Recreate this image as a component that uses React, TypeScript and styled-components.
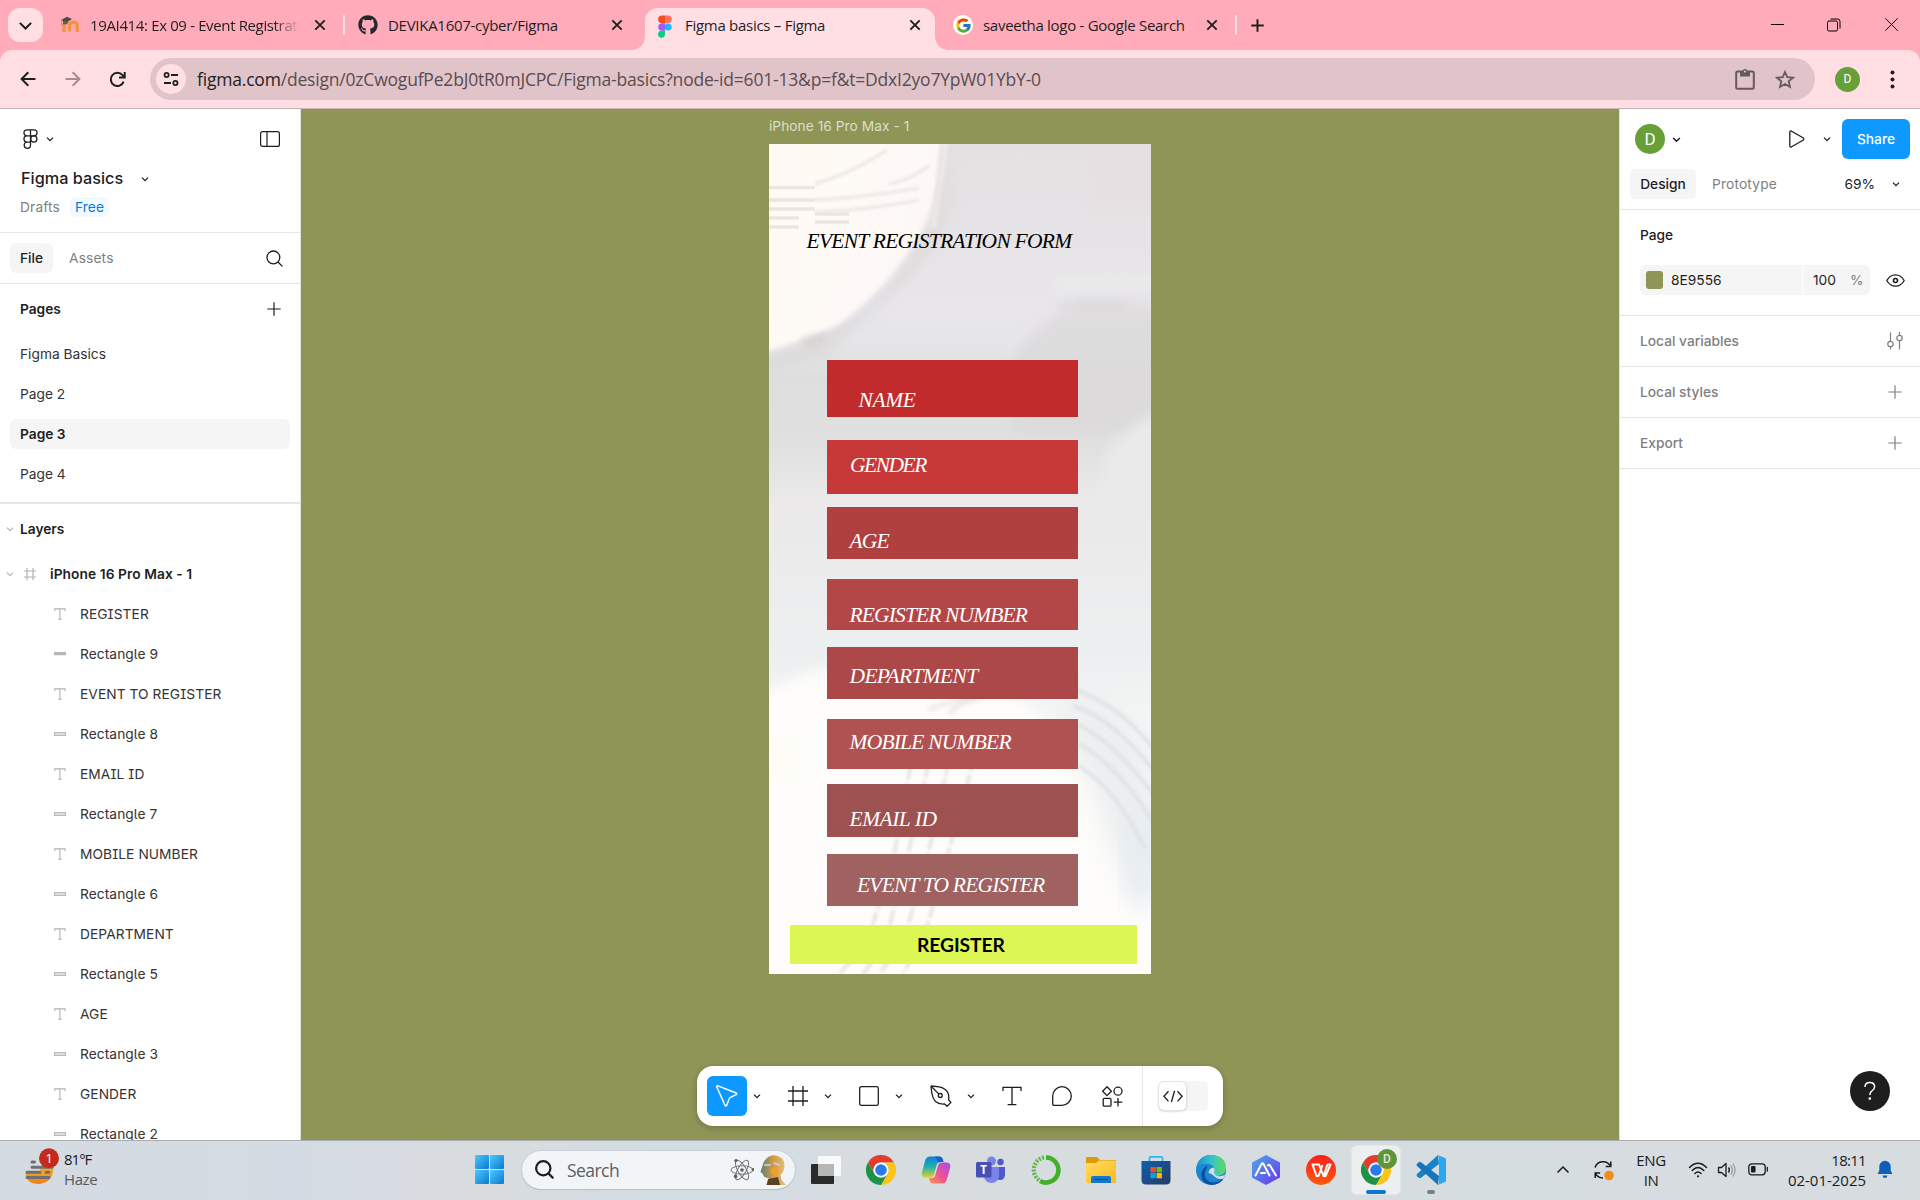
import React from "react";
import styled, { createGlobalStyle, css } from "styled-components";
import { FcGoogle } from "react-icons/fc";
import { FaGithub } from "react-icons/fa";

const ui = `"Open Sans", "Noto Sans", sans-serif`;
const inter = `Inter, "Liberation Sans", sans-serif`;

const Global = createGlobalStyle`
  * { box-sizing: border-box; }
  html, body { margin: 0; padding: 0; }
  body { width: 1920px; height: 1200px; overflow: hidden; background: #8e9556; }
  svg { display: block; flex: none; }
`;

const Screen = styled.div`
  width: 1920px;
  height: 1200px;
  display: flex;
  flex-direction: column;
  overflow: hidden;
  font-family: ${inter};
  font-size: 13.75px;
  color: #1e1e1e;
`;

/* ---------- browser ---------- */
const TabStrip = styled.header`
  height: 50px;
  flex: none;
  display: flex;
  background: #ffabba;
  font-family: ${ui};
  font-size: 15px;
`;
const TabSearch = styled.div`
  width: 35px;
  height: 34px;
  margin: 8px 5px 0 8px;
  border-radius: 12px;
  background: #ffdee4;
  display: grid;
  place-items: center;
`;
const Tab = styled.div<{ $w: number; $pl: number; $pr: number; $active?: boolean }>`
  position: relative;
  width: ${(p) => p.$w}px;
  height: 42px;
  margin-top: 8px;
  padding: 0 ${(p) => p.$pr}px 8px ${(p) => p.$pl}px;
  display: flex;
  align-items: center;
  gap: 10px;
  ${(p) =>
    p.$active &&
    css`
      background: #ffdee4;
      border-radius: 13px 13px 0 0;
      &::before,
      &::after {
        content: "";
        position: absolute;
        bottom: 0;
        width: 13px;
        height: 13px;
      }
      &::before {
        left: -13px;
        background: radial-gradient(circle at 0 0, transparent 12.5px, #ffdee4 13px);
      }
      &::after {
        right: -13px;
        background: radial-gradient(circle at 100% 0, transparent 12.5px, #ffdee4 13px);
      }
    `}
`;
const Favicon = styled.span`
  width: 20px;
  height: 20px;
  flex: none;
  display: grid;
  place-items: center;
`;
const GoogleDot = styled(Favicon)`
  border-radius: 50%;
  background: #fff;
`;
const TabTitle = styled.span<{ $fade?: boolean }>`
  flex: 1;
  min-width: 0;
  overflow: hidden;
  white-space: nowrap;
  letter-spacing: -0.28px;
  color: #1f1f1f;
  ${(p) =>
    p.$fade &&
    css`
      flex: none;
      width: 209px;
      margin-right: auto;
      letter-spacing: -0.36px;
      mask-image: linear-gradient(90deg, #000 88%, transparent 100%);
    `}
`;
const TabDivider = styled.i`
  width: 2px;
  height: 20px;
  margin-top: 15px;
  border-radius: 1px;
  background: #ffdee4;
`;
const NewTab = styled.div`
  width: 40px;
  height: 50px;
  display: grid;
  place-items: center;
`;
const WindowButtons = styled.div`
  margin-left: auto;
  display: flex;
`;
const WindowButton = styled.div`
  width: 57px;
  height: 49px;
  display: grid;
  place-items: center;
`;
const ToolbarBack = styled.div`
  background: #ffabba;
  flex: none;
`;
const Toolbar = styled.div`
  height: 59px;
  background: #ffdee4;
  border-radius: 12px 12px 0 0;
  border-bottom: 1px solid #cdb4bc;
  display: flex;
  align-items: center;
  padding-left: 5px;
`;
const NavButton = styled.div`
  width: 45px;
  height: 40px;
  display: grid;
  place-items: center;
`;
const AccountButtons = styled.div`
  display: flex;
  padding-left: 10px;
`;
const AddressBar = styled.div`
  width: 1665px;
  height: 42px;
  margin-left: 10px;
  padding: 0 20px 0 6px;
  border-radius: 21px;
  background: #e0c4c9;
  display: flex;
  align-items: center;
  font-family: ${ui};
`;
const SiteInfo = styled.div`
  width: 30px;
  height: 30px;
  border-radius: 50%;
  background: #ffdee4;
  display: grid;
  place-items: center;
  margin-right: 11px;
`;
const Url = styled.span`
  flex: 1;
  font-size: 17.5px;
  letter-spacing: -0.195px;
  color: #5b4c50;
  b {
    font-weight: 400;
    color: #1f1f1f;
  }
`;
const AddressActions = styled.div`
  display: flex;
  align-items: center;
  gap: 20px;
`;
const Profile = styled.div<{ $size: number; $font: number }>`
  width: ${(p) => p.$size}px;
  height: ${(p) => p.$size}px;
  border-radius: 50%;
  background: #689f38;
  color: #fff;
  font-family: Roboto, sans-serif;
  font-size: ${(p) => p.$font}px;
  display: grid;
  place-items: center;
`;

/* ---------- workspace ---------- */
const Workspace = styled.div`
  height: 1031px;
  flex: none;
  display: flex;
`;
const SidePanel = styled.aside`
  width: 301px;
  flex: none;
  background: #fff;
  border-right: 1px solid #e2e2e2;
  overflow: hidden;
`;
const Section = styled.section<{ $h: number; $line?: number }>`
  height: ${(p) => p.$h}px;
  border-bottom: ${(p) => p.$line ?? 1}px solid #e6e6e6;
`;
const Row = styled.div<{ $h: number; $pl?: number; $pr?: number; $gap?: number }>`
  height: ${(p) => p.$h}px;
  padding: 0 ${(p) => p.$pr ?? 0}px 0 ${(p) => p.$pl ?? 0}px;
  display: flex;
  align-items: center;
  gap: ${(p) => p.$gap ?? 0}px;
`;
const Push = styled.span`
  margin-left: auto;
  display: flex;
  align-items: center;
`;
const FileName = styled.span`
  font-size: 16.25px;
  font-weight: 550;
  letter-spacing: 0;
  line-height: 20px;
  padding-bottom: 2px;
`;
const Muted = styled.span`
  color: #808080;
  letter-spacing: 0.15px;
`;
const Plan = styled.span`
  height: 20px;
  padding: 0 5px;
  line-height: 20px;
  border-radius: 6px;
  background: #f2f9ff;
  color: #007be5;
  letter-spacing: 0.1px;
`;
const Pill = styled.span<{ $w: number }>`
  width: ${(p) => p.$w}px;
  height: 30px;
  border-radius: 6px;
  background: #f5f5f5;
  display: grid;
  place-items: center;
  font-weight: 550;
`;
const Heading = styled.span`
  font-weight: 600;
  letter-spacing: -0.02px;
`;
const PageList = styled.div`
  padding: 5px 10px 0;
  display: flex;
  flex-direction: column;
  gap: 10px;
`;
const PageItem = styled.div<{ $current?: boolean }>`
  height: 30px;
  line-height: 30px;
  padding-left: 10px;
  border-radius: 6px;
  color: #333;
  ${(p) => p.$current && "background:#f5f5f5;font-weight:600;color:#1e1e1e;"}
`;
const LayerIcon = styled.span`
  width: 12px;
  display: grid;
  place-items: center;
`;
const LayerName = styled.span<{ $root?: boolean }>`
  font-feature-settings: "cv05", "cv08";
  color: ${(p) => (p.$root ? "#1e1e1e" : "#333")};
  font-weight: ${(p) => (p.$root ? 600 : 400)};
  letter-spacing: 0.07px;
  padding-left: ${(p) => (p.$root ? 4 : 0)}px;
  white-space: nowrap;
`;

/* ---------- canvas ---------- */
const Stage = styled.main`
  position: relative;
  width: 1318px;
  flex: none;
  background: #8e9556;
  overflow: hidden;
`;
const FrameLabel = styled.div`
  position: absolute;
  left: 468px;
  top: 9px;
  line-height: 17px;
  letter-spacing: 0.03px;
  color: #dcdfc9;
`;
const Phone = styled.div`
  position: absolute;
  left: 468px;
  top: 35px;
  width: 381.5px;
  height: 830px;
  background: #e4e3e4;
  overflow: hidden;
`;
const Backdrop = styled.svg`
  position: absolute;
  inset: 0;
`;
const Shape = styled.div<{ $x: number; $y: number; $w: number; $h: number; $c: string }>`
  position: absolute;
  left: ${(p) => p.$x}px;
  top: ${(p) => p.$y}px;
  width: ${(p) => p.$w}px;
  height: ${(p) => p.$h}px;
  background: ${(p) => p.$c};
`;
const Caption = styled.div<{ $x: number; $base: number; $dark?: boolean; $ls: number }>`
  position: absolute;
  left: ${(p) => p.$x}px;
  top: ${(p) => p.$base - 21}px;
  line-height: 28px;
  font-family: "Liberation Serif", serif;
  font-style: italic;
  font-size: 21.5px;
  letter-spacing: ${(p) => p.$ls}px;
  color: ${(p) => (p.$dark ? "#000" : "#fff")};
  white-space: nowrap;
`;
const Submit = styled.div`
  position: absolute;
  left: 148px;
  top: 787px;
  line-height: 28px;
  font-family: Lato, sans-serif;
  font-weight: 700;
  font-size: 19.3px;
  letter-spacing: -0.1px;
  color: #000;
`;
const ToolDock = styled.div`
  position: absolute;
  left: 396px;
  top: 957px;
  width: 526px;
  height: 60px;
  padding: 0 15px 0 10px;
  border-radius: 16px;
  background: #fff;
  box-shadow: 0 2px 6px rgba(0, 0, 0, 0.2), 0 0 1px rgba(0, 0, 0, 0.2);
  display: flex;
  align-items: center;
`;
const Tool = styled.div<{ $on?: boolean; $ml?: number }>`
  width: 40px;
  height: 40px;
  margin-left: ${(p) => p.$ml ?? 0}px;
  border-radius: 6px;
  background: ${(p) => (p.$on ? "#0d99ff" : "transparent")};
  display: grid;
  place-items: center;
`;
const ToolCaret = styled.div`
  width: 21px;
  padding-right: 1px;
  display: grid;
  place-items: center;
`;
const DockDivider = styled.i`
  width: 1px;
  height: 60px;
  margin-left: 10px;
  background: #e6e6e6;
`;
const DevToggle = styled.div`
  width: 50px;
  height: 30px;
  margin-left: auto;
  border-radius: 6px;
  background: #f5f5f5;
`;
const DevKnob = styled.div`
  width: 29px;
  height: 30px;
  border-radius: 6px;
  background: #fff;
  border: 1px solid #e3e3e3;
  box-shadow: 0 1px 2px rgba(0, 0, 0, 0.12);
  display: grid;
  place-items: center;
`;

/* ---------- right panel ---------- */
const Inspector = styled.aside`
  width: 301px;
  flex: none;
  background: #fff;
  border-left: 1px solid #e2e2e2;
  display: flex;
  flex-direction: column;
`;
const Share = styled.div`
  width: 68px;
  height: 40px;
  margin-left: 11px;
  border-radius: 6px;
  background: #0d99ff;
  color: #fff;
  font-weight: 500;
  display: grid;
  place-items: center;
`;
const Zoom = styled.span`
  letter-spacing: 0;
  margin-right: 17px;
`;
const ColorField = styled.div`
  width: 230px;
  height: 30px;
  border-radius: 6px;
  background: #f5f5f5;
  display: flex;
  align-items: center;
  padding-left: 6px;
`;
const Swatch = styled.i`
  width: 17px;
  height: 18px;
  border-radius: 3px;
  background: #8e9556;
  margin-right: 8px;
`;
const Hex = styled.span`
  width: 131px;
`;
const Opacity = styled.span`
  height: 28px;
  line-height: 28px;
  padding-left: 10px;
  border-left: 1px solid #fff;
  flex: 1;
  display: flex;
  gap: 14px;
`;
const SectionTitle = styled.span<{ $dark?: boolean }>`
  font-weight: 500;
  color: ${(p) => (p.$dark ? "#1e1e1e" : "#7f7f7f")};
`;
const Help = styled.div`
  width: 40px;
  height: 40px;
  margin: auto 30px 29px auto;
  border-radius: 50%;
  background: #1e1e1e;
  display: grid;
  place-items: center;
`;

/* ---------- taskbar ---------- */
const Taskbar = styled.footer`
  height: 60px;
  flex: none;
  padding-bottom: 2px;
  display: flex;
  align-items: center;
  background: linear-gradient(90deg, #d4dce1 0, #d4dbe4 15%, #d9dcdf 25%, #d3dde3 35%, #d8dcdf 50%, #d5dde0 70%, #d7dcdf 100%);
  border-top: 1px solid #a9adaf;
  font-family: ${ui};
  color: #1b1b1b;
  font-size: 15px;
`;
const Weather = styled.div`
  width: 475px;
  padding-left: 24px;
  display: flex;
  align-items: center;
`;
const Stack = styled.div<{ $align?: string; $w?: number; $ls?: number }>`
  display: flex;
  flex-direction: column;
  line-height: 20px;
  align-items: ${(p) => p.$align ?? "flex-start"};
  ${(p) => p.$w && `width:${p.$w}px;`}
  letter-spacing: ${(p) => p.$ls ?? -0.4}px;
`;
const WeatherText = styled(Stack)`
  padding: 0 0 2px 4px;
  span:first-child {
    letter-spacing: -1px;
  }
  span:nth-child(2) {
    color: #55595c;
  }
`;
const Clock = styled(Stack)`
  span:first-child {
    letter-spacing: -0.7px;
  }
`;
const SearchBox = styled.div`
  width: 273px;
  height: 38px;
  margin: 0 16px 0 18px;
  padding: 0 9px 0 13px;
  border-radius: 19px;
  background: #f2f5f8;
  box-shadow: 0 0 0 1px rgba(190, 200, 210, 0.6), 0 1px 1px #a9b2ba;
  display: flex;
  align-items: center;
  font-size: 17.5px;
  color: #5c5f61;
`;
const SearchLabel = styled.span`
  margin: 0 auto 0 13px;
  letter-spacing: -0.55px;
`;
const Doodle = styled.span`
  display: flex;
  align-items: center;
  gap: 4px;
`;
const Apps = styled.div`
  display: flex;
  gap: 7px;
  margin-left: -9px;
`;
const AppTile = styled.div<{ $active?: boolean; $mark?: string; $mw?: number }>`
  position: relative;
  width: 48px;
  height: 48px;
  border-radius: 5px;
  display: grid;
  place-items: center;
  background: ${(p) => (p.$active ? "#eceeef" : "transparent")};
  box-shadow: ${(p) => (p.$active ? "0 0 0 1px rgba(255,255,255,.35)" : "none")};
  &::after {
    content: "";
    position: absolute;
    bottom: 0;
    left: ${(p) => (48 - (p.$mw ?? 0)) / 2}px;
    width: ${(p) => p.$mw ?? 0}px;
    height: 4px;
    border-radius: 2px;
    background: ${(p) => p.$mark ?? "transparent"};
  }
`;
const AppBadge = styled.div`
  position: absolute;
  right: 3px;
  top: 3px;
  width: 20px;
  height: 20px;
  border-radius: 50%;
  background: #5f9438;
  color: #dfe8d5;
  font: 500 12px/20px Roboto, sans-serif;
  text-align: center;
`;
const Tray = styled.div`
  margin-left: auto;
  padding-right: 16px;
  display: flex;
  align-items: center;
`;
const TrayItem = styled.div<{ $w: number }>`
  width: ${(p) => p.$w}px;
  display: grid;
  place-items: center;
`;

/* ---------- icons ---------- */
const Caret = ({ s = 8, c = "#1e1e1e", w = 1.3 }: { s?: number; c?: string; w?: number }) => (
  <svg width={s} height={s} viewBox="0 0 8 8" fill="none" stroke={c} strokeWidth={w}>
    <path d="M1 2.6 L4 5.6 L7 2.6" />
  </svg>
);
const Plus = ({ s = 14, c = "#1e1e1e", w = 1.2 }: { s?: number; c?: string; w?: number }) => (
  <svg width={s} height={s} viewBox="0 0 14 14" stroke={c} strokeWidth={w}>
    <path d="M7 0.3V13.7M0.3 7H13.7" />
  </svg>
);
const Cross = () => (
  <svg width="16" height="16" viewBox="0 0 16 16" stroke="#1f1f1f" strokeWidth="1.9">
    <path d="M3.3 3.3L12.7 12.7M12.7 3.3L3.3 12.7" />
  </svg>
);
const Moodle = () => (
  <svg width="20" height="20" viewBox="0 0 20 20" fill="none">
    <path d="M4 17V10Q4 7.6 6.5 7.6Q9.6 7.6 9.6 10.5V16.5M9.6 10.5Q9.6 7.2 13.2 7.2Q17.2 7.2 17.2 11V17" stroke="#f7923a" strokeWidth="3.2" />
    <path d="M1 5L7 1.8L12 4L6.5 7.6Z" fill="#4b4a4c" />
    <path d="M3 6V9.5L7.5 9V6.5Z" fill="#6d5550" />
    <path d="M1.6 5.2V11" stroke="#b98a7c" strokeWidth=".8" />
  </svg>
);
const FigmaColor = () => (
  <svg width="14" height="24" viewBox="0 0 14 24">
    <path d="M7 .5H4a3.500 3.500 0 0 0 0 7.700H7z" fill="#f24e1e" />
    <path d="M7 .5h3a3.500 3.500 0 0 1 0 7.700H7z" fill="#ff7262" />
    <path d="M7 8.200H4a3.500 3.500 0 0 0 0 7.600H7z" fill="#a259ff" />
    <circle cx="10.200" cy="12" r="3.500" fill="#1abcfe" />
    <path d="M4 15.800H7v4a3.500 3.500 0 1 1-3-4z" fill="#0acf83" />
  </svg>
);
const FigmaOutline = () => (
  <svg width="15" height="20" viewBox="0 0 15 20" fill="none" stroke="#1e1e1e" strokeWidth="1.25">
    <path d="M7.5.8H4a3 3 0 0 0 0 6.1H7.5zM7.5.8H11a3 3 0 0 1 0 6.1H7.5zM7.5 6.9H4a3.05 3.05 0 0 0 0 6.1H7.5zM7.5 13H4a3.15 3.15 0 1 0 3.5 3.1z" />
    <circle cx="10.8" cy="9.95" r="3.1" />
  </svg>
);
const Magnify = ({ s = 17, w = 1.3, c = "#1e1e1e" }: { s?: number; w?: number; c?: string }) => (
  <svg width={s} height={s} viewBox="0 0 17 17" fill="none" stroke={c} strokeWidth={w}>
    <circle cx="7.4" cy="7.4" r="6.4" />
    <path d="M12 12L16.4 16.4" />
  </svg>
);
const TextGlyph = () => (
  <svg width="12" height="12" viewBox="0 0 12 12" fill="none" stroke="#b3b3b3" strokeWidth="1.1">
    <path d="M.8 3V.9H11V3M5.9 .9V11M4 11.2H7.8" />
  </svg>
);
const BarGlyph = ({ solid }: { solid?: boolean }) => (
  <svg width="12" height="4" viewBox="0 0 12 4">
    <rect x=".4" y=".4" width="11.2" height={solid ? 2.4 : 3.2} fill={solid ? "#b3b3b3" : "#dcdcdc"} stroke="#b3b3b3" strokeWidth=".9" />
  </svg>
);
const FrameGlyph = ({ s, c, w }: { s: number; c: string; w: number }) => (
  <svg width={s} height={s} viewBox="0 0 20 20" stroke={c} strokeWidth={w}>
    <path d="M5 0V20M15 0V20M0 5H20M0 15H20" />
  </svg>
);
const ChromeLogo = () => (
  <svg width="30" height="30" viewBox="0 0 48 48">
    <path d="M24 12H44.8A24 24 0 0 0 3.2 12L13.6 30A12 12 0 0 1 24 12z" fill="#e33b2e" />
    <path d="M44.8 12A24 24 0 0 1 24 48L34.4 30A12 12 0 0 0 24 12z" fill="#fcc419" />
    <path d="M3.2 12A24 24 0 0 0 24 48L34.4 30A12 12 0 0 1 13.6 30z" fill="#1e9346" />
    <circle cx="24" cy="24" r="12" fill="#fff" />
    <circle cx="24" cy="24" r="9.3" fill="#2b79ea" />
  </svg>
);

const Marble = () => (
  <Backdrop width="382" height="830" viewBox="0 0 382 830" fill="none">
    <defs>
      <linearGradient id="base" x1="0" y1="0" x2="0" y2="830" gradientUnits="userSpaceOnUse">
        <stop offset="0" stopColor="#e3e1e2" />
        <stop offset=".2" stopColor="#e8e6ea" />
        <stop offset=".24" stopColor="#e6e5e8" />
        <stop offset=".28" stopColor="#dfdedf" />
        <stop offset=".36" stopColor="#e0e0e0" />
        <stop offset=".43" stopColor="#ebe9ea" />
        <stop offset=".55" stopColor="#ecedee" />
        <stop offset=".62" stopColor="#edf0f0" />
        <stop offset=".72" stopColor="#f6f7f8" />
        <stop offset="1" stopColor="#fdfdfd" />
      </linearGradient>
      <linearGradient id="pearl" x1="0" y1="0" x2="180" y2="60" gradientUnits="userSpaceOnUse">
        <stop offset="0" stopColor="#fffbf3" />
        <stop offset="1" stopColor="#fdf8f7" />
      </linearGradient>
      <filter id="b1" x="-20%" y="-20%" width="140%" height="140%"><feGaussianBlur stdDeviation="1.5" /></filter>
      <filter id="b2" x="-20%" y="-20%" width="140%" height="140%"><feGaussianBlur stdDeviation="2.5" /></filter>
      <filter id="b5" x="-30%" y="-30%" width="160%" height="160%"><feGaussianBlur stdDeviation="6" /></filter>
      <filter id="b14" x="-40%" y="-40%" width="180%" height="180%"><feGaussianBlur stdDeviation="14" /></filter>
    </defs>
    <rect width="382" height="830" fill="url(#base)" />
    <rect x="322" y="-20" width="80" height="84" fill="#e7e0e2" filter="url(#b5)" />
    <path d="M288 148Q335 136 400 146V132H288z" fill="#ebebeb" filter="url(#b5)" />
    <path d="M245 215Q262 180 310 160Q350 150 400 168V255Q370 290 340 290H245z" fill="#dbd9da" filter="url(#b5)" opacity=".75" />
    <path d="M288 160Q320 150 357 160V166H288z" fill="#d9d8d9" filter="url(#b2)" opacity=".5" />
    <path d="M400 262Q362 282 340 304L322 380H400z" fill="#ebeaeb" filter="url(#b5)" />
    <path d="M-5 214Q60 190 100 160Q150 112 172 60L182 -5V60Q165 120 106 166Q70 200 60 212L-5 226z" fill="#d6d4d2" opacity=".5" filter="url(#b5)" />
    <path d="M-5 -5H178Q172 50 152 88Q120 144 70 180Q35 196 -5 208z" fill="url(#pearl)" filter="url(#b2)" />
    <path d="M30 194L56 188V200L40 204z" fill="#cfccc8" filter="url(#b2)" opacity=".45" />
    <g stroke="#ece6e4" strokeWidth="4" filter="url(#b1)">
      <path d="M174 0Q170 40 164 84" strokeWidth="7" />
      <path d="M46 40Q85 28 118 6" strokeWidth="3" />
      <path d="M46 56Q90 54 150 44" strokeWidth="3" />
      <path d="M46 68Q100 66 150 56" strokeWidth="3" />
      <path d="M120 40Q140 36 160 22" strokeWidth="3" />
    </g>
    <g stroke="#ebe6e2" strokeWidth="3.500">
      <path d="M0 43.500H46" />
      <path d="M0 56H46" />
      <path d="M0 65H46" />
      <path d="M0 74H30M46 70H80" />
      <path d="M0 83H30M46 78H80" />
    </g>
    <path d="M-20 560Q10 536 60 524Q160 536 240 550Q310 590 330 640Q352 720 402 770V850H-20z" fill="#fefdfb" filter="url(#b5)" />
    <path d="M300 540Q350 560 382 610V760Q352 740 336 690Q330 640 300 610z" fill="#eceeef" filter="url(#b14)" />
    <rect x="360" y="660" width="26" height="100" fill="#e3ebf1" filter="url(#b14)" />
    <rect x="5" y="590" width="28" height="50" fill="#fdfdf5" filter="url(#b5)" />
    <g stroke="#e2e3e5" strokeWidth="4" filter="url(#b1)">
      <path d="M304 545Q350 560 384 604" />
      <path d="M304 562Q345 575 384 626" />
      <path d="M308 580Q345 598 384 650" />
      <path d="M310 600Q350 622 384 678" />
      <path d="M310 622Q346 644 376 704" />
    </g>
    <g stroke="#e6e5e5" strokeWidth="4" filter="url(#b2)">
      <path d="M160 566Q190 550 250 552" />
      <path d="M180 570Q190 556 230 550" />
    </g>
    <g stroke="#e8e6e5" strokeWidth="4" filter="url(#b1)">
      <path d="M142 620L126 706L98 800L70 830" strokeDasharray="16 3" />
      <path d="M160 618L140 706L116 800L94 830" strokeDasharray="16 3" />
      <path d="M180 616L160 706L134 800L110 830" strokeDasharray="16 3" />
      <path d="M206 612L180 706L156 790L134 830" strokeDasharray="16 3" />
      <path d="M236 608L214 624" />
    </g>
  </Backdrop>
);

const fields: Array<[number, number, string]> = [
  [216, 56.5, "#c22b2b"],
  [296, 54, "#c73838"],
  [363, 52, "#b03f3f"],
  [435, 51.3, "#b34747"],
  [503.3, 51.7, "#ac4848"],
  [575, 50, "#b15252"],
  [640, 53, "#9d5151"],
  [710.3, 52, "#a06161"],
];
const captions: Array<[string, number, number, number]> = [
  ["NAME", 89.5, 263, -0.4],
  ["GENDER", 81, 328, -1.5],
  ["AGE", 80.5, 403.5, -0.8],
  ["REGISTER NUMBER", 80.5, 477.5, -0.86],
  ["DEPARTMENT", 80.5, 539, -0.65],
  ["MOBILE NUMBER", 80.5, 604.5, -0.78],
  ["EMAIL ID", 80.5, 681.5, -0.5],
  ["EVENT TO REGISTER", 88, 747.5, -0.81],
];
const layers = [
  "REGISTER", "Rectangle 9", "EVENT TO REGISTER", "Rectangle 8", "EMAIL ID", "Rectangle 7", "MOBILE NUMBER",
  "Rectangle 6", "DEPARTMENT", "Rectangle 5", "AGE", "Rectangle 3", "GENDER", "Rectangle 2",
];

const Browser = () => (
  <>
    <TabStrip>
      <TabSearch><Caret s={15} w={1.1} /></TabSearch>
      <Tab $w={295} $pl={12} $pr={15}>
        <Favicon><Moodle /></Favicon>
        <TabTitle $fade>19AI414: Ex 09 - Event Registration</TabTitle>
        <Cross />
      </Tab>
      <TabDivider />
      <Tab $w={300} $pl={13} $pr={20}>
        <Favicon><FaGithub size={20} color="#24292f" /></Favicon>
        <TabTitle>DEVIKA1607-cyber/Figma</TabTitle>
        <Cross />
      </Tab>
      <Tab $w={290} $pl={10} $pr={12} $active>
        <Favicon><FigmaColor /></Favicon>
        <TabTitle>Figma basics – Figma</TabTitle>
        <Cross />
      </Tab>
      <Tab $w={300} $pl={18} $pr={15}>
        <GoogleDot><FcGoogle size={17} /></GoogleDot>
        <TabTitle>saveetha logo - Google Search</TabTitle>
        <Cross />
      </Tab>
      <TabDivider />
      <NewTab><Plus s={13} w={2.1} /></NewTab>
      <WindowButtons>
        <WindowButton><svg width="13" height="13" stroke="#000"><path d="M0 6.5H13" /></svg></WindowButton>
        <WindowButton>
          <svg width="16" height="14" fill="none" stroke="#000">
            <rect x=".5" y="3" width="10" height="10" rx="1.5" />
            <path d="M3.5 1H10.5Q13 1 13 3.5V10.5" />
          </svg>
        </WindowButton>
        <WindowButton><svg width="13" height="13" stroke="#000"><path d="M.3 .3L12.7 12.7M12.7 .3L.3 12.7" /></svg></WindowButton>
      </WindowButtons>
    </TabStrip>
    <ToolbarBack>
      <Toolbar>
        <NavButton>
          <svg width="16" height="16" fill="none" stroke="#1f1f1f" strokeWidth="2"><path d="M15.5 8H1.8M8.3 1.3L1.6 8L8.3 14.7" /></svg>
        </NavButton>
        <NavButton>
          <svg width="16" height="16" fill="none" stroke="#a78d93" strokeWidth="2"><path d="M.5 8H14.2M7.7 1.3L14.4 8L7.7 14.7" /></svg>
        </NavButton>
        <NavButton>
          <svg width="17" height="17" fill="none" stroke="#1f1f1f" strokeWidth="2">
            <path d="M14.6 10.6A6.6 6.6 0 1 1 13.5 4.2L15.5 6.2" />
            <path d="M15.7 1V6.6H10" />
          </svg>
        </NavButton>
        <AddressBar>
          <SiteInfo>
            <svg width="16" height="16" fill="none" stroke="#1f1f1f" strokeWidth="1.8">
              <circle cx="3.6" cy="4" r="2.1" />
              <path d="M8 4H15M1 12H8" />
              <circle cx="12.4" cy="12" r="2.1" />
            </svg>
          </SiteInfo>
          <Url><b>figma.com</b>/design/0zCwogufPe2bJ0tR0mJCPC/Figma-basics?node-id=601-13&amp;p=f&amp;t=DdxI2yo7YpW01YbY-0</Url>
          <AddressActions>
            <svg width="20" height="21" fill="none" stroke="#66595d" strokeWidth="2">
              <rect x="1.2" y="2.6" width="17.6" height="17.2" rx="1.5" />
              <path d="M6 3V6.5H14V3" fill="#66595d" />
              <circle cx="10" cy="2.6" r="1.8" strokeWidth="1.4" fill="#e0c4c9" />
            </svg>
            <svg width="20" height="19" viewBox="0 0 20 19" fill="none" stroke="#66595d" strokeWidth="1.8" strokeLinejoin="miter">
              <path d="M10 2L12.3 7.2L18 7.7L13.7 11.4L15 17L10 14L5 17L6.3 11.4L2 7.7L7.7 7.2Z" />
            </svg>
          </AddressActions>
        </AddressBar>
        <AccountButtons>
          <NavButton><Profile $size={25} $font={12}>D</Profile></NavButton>
          <NavButton>
            <svg width="5" height="19" fill="#1f1f1f"><circle cx="2.5" cy="2.5" r="2" /><circle cx="2.5" cy="9.5" r="2" /><circle cx="2.5" cy="16.5" r="2" /></svg>
          </NavButton>
        </AccountButtons>
      </Toolbar>
    </ToolbarBack>
  </>
);

const LeftPanel = () => (
  <SidePanel>
    <Section $h={124}>
      <Row $h={60} $pl={23} $pr={20} $gap={8}>
        <FigmaOutline />
        <Caret />
        <Push>
          <svg width="20" height="16" fill="none" stroke="#1e1e1e" strokeWidth="1.2"><rect x=".6" y=".6" width="18.8" height="14.8" rx="2" /><path d="M7 .6V15.4" /></svg>
        </Push>
      </Row>
      <Row $h={20} $pl={21} $gap={18}><FileName>Figma basics</FileName><Caret /></Row>
      <Row $h={36} $pl={20} $gap={10}><Muted>Drafts</Muted><Plan>Free</Plan></Row>
    </Section>
    <Section $h={51}>
      <Row $h={50} $pl={10} $pr={17} $gap={16}>
        <Pill $w={43}>File</Pill>
        <Muted>Assets</Muted>
        <Push><Magnify /></Push>
      </Row>
    </Section>
    <Section $h={220} $line={2}>
      <Row $h={50} $pl={20} $pr={19}><Heading>Pages</Heading><Push><Plus /></Push></Row>
      <PageList>
        <PageItem>Figma Basics</PageItem>
        <PageItem>Page 2</PageItem>
        <PageItem $current>Page 3</PageItem>
        <PageItem>Page 4</PageItem>
      </PageList>
    </Section>
    <Row $h={50} $pl={6} $gap={6}><Caret c="#b3b3b3" w={1.1} /><Heading>Layers</Heading></Row>
    <Row $h={40} $pl={6} $gap={10}>
      <Caret c="#b3b3b3" w={1.1} />
      <LayerIcon><FrameGlyph s={12} c="#b3b3b3" w={2} /></LayerIcon>
      <LayerName $root>iPhone 16 Pro Max - 1</LayerName>
    </Row>
    {layers.map((name) => (
      <Row key={name} $h={40} $pl={54} $gap={14}>
        <LayerIcon>{name.startsWith("Rectangle") ? <BarGlyph solid={name.endsWith("9")} /> : <TextGlyph />}</LayerIcon>
        <LayerName>{name}</LayerName>
      </Row>
    ))}
  </SidePanel>
);

const ink = { fill: "none", stroke: "#1e1e1e", strokeWidth: 1.3 } as const;

const Dock = () => (
  <ToolDock>
    <Tool $on>
      <svg width="22" height="22" viewBox="0 0 22 22" fill="none" stroke="#fff" strokeWidth="1.4" strokeLinejoin="round"><path d="M1.9 .8L20.2 8Q21.4 8.7 20.2 9.6L13.6 12.8L10.6 20.4Q9.9 21.7 9.1 20.4L.8 2Q.6 .5 1.9 .8z" /></svg>
    </Tool>
    <ToolCaret><Caret /></ToolCaret>
    <Tool $ml={10}><FrameGlyph s={20} c="#1e1e1e" w={1.3} /></Tool>
    <ToolCaret><Caret /></ToolCaret>
    <Tool $ml={10}><svg width="20" height="20" {...ink}><rect x=".7" y=".7" width="18.6" height="18.6" rx="1.6" /></svg></Tool>
    <ToolCaret><Caret /></ToolCaret>
    <Tool $ml={11}>
      <svg width="22" height="22" viewBox="0 0 22 22" {...ink} strokeLinejoin="round">
        <path d="M1 1.500Q1 .8 2 1L9 1.800Q15.500 3 17.800 7.500Q19.300 11 18.600 15L21 17.400L17 21.200L14.600 19Q9 19.600 5.500 16.500Q2.600 13.500 1.800 8z" />
        <path d="M1.200 1.200L8.900 9.100" />
        <circle cx="10.300" cy="10.500" r="2" />
      </svg>
    </Tool>
    <ToolCaret><Caret /></ToolCaret>
    <Tool $ml={10}><svg width="20" height="20" {...ink}><path d="M1 5V1.3H19V5M10 1.3V18.7M5.6 18.7H14.4" /></svg></Tool>
    <Tool $ml={10}><svg width="20" height="20" {...ink}><path d="M10 .7A9.3 9.3 0 1 1 10 19.3H2Q.7 19.3 .7 18V10A9.3 9.3 0 0 1 10 .7z" /></svg></Tool>
    <Tool $ml={10}>
      <svg width="21" height="21" {...ink} strokeLinejoin="round">
        <path d="M5 .8L9.4 5.2L5 9.6L.6 5.2z" />
        <circle cx="16" cy="5.2" r="4" />
        <rect x="1.2" y="12.3" width="7.8" height="7.8" rx="1.2" />
        <path d="M16 12V20.5M11.8 16.2H20.3" />
      </svg>
    </Tool>
    <DockDivider />
    <DevToggle>
      <DevKnob>
        <svg width="20" height="13" {...ink}><path d="M5.5 1.2L.9 6.3L5.5 11.4M14.5 1.2L19.1 6.3L14.5 11.4M11.6 .8L8.4 12" /></svg>
      </DevKnob>
    </DevToggle>
  </ToolDock>
);

const Canvas = () => (
  <Stage>
    <FrameLabel>iPhone 16 Pro Max - 1</FrameLabel>
    <Phone>
      <Marble />
      {fields.map(([y, h, c]) => <Shape key={y} $x={58} $y={y} $w={251} $h={h} $c={c} />)}
      <Shape $x={20.7} $y={781.3} $w={347.3} $h={38.3} $c="#dcf754" />
      <Caption $x={37.5} $base={104} $dark $ls={-0.74}>EVENT REGISTRATION FORM</Caption>
      {captions.map(([t, x, b, ls]) => <Caption key={t} $x={x} $base={b} $ls={ls}>{t}</Caption>)}
      <Submit>REGISTER</Submit>
    </Phone>
    <Dock />
  </Stage>
);

const RightPanel = () => (
  <Inspector>
    <Section $h={101}>
      <Row $h={60} $pl={15} $pr={10} $gap={7}>
        <Profile $size={30} $font={17}>D</Profile>
        <Caret s={9} />
        <Push>
          <svg width="16" height="18" {...ink} strokeLinejoin="round"><path d="M.8 2.2Q.8 .3 2.6 1.2L14 7.8Q15.6 9 14 10.2L2.6 16.8Q.8 17.7 .8 15.8z" /></svg>
        </Push>
        <Row $h={40} $pl={11}><Caret /><Share>Share</Share></Row>
      </Row>
      <Row $h={30} $pl={10} $pr={20} $gap={16}>
        <Pill $w={66}>Design</Pill>
        <Muted>Prototype</Muted>
        <Push><Zoom>69%</Zoom><Caret /></Push>
      </Row>
    </Section>
    <Section $h={106}>
      <Row $h={50} $pl={20}><SectionTitle $dark>Page</SectionTitle></Row>
      <Row $h={40} $pl={20} $pr={15}>
        <ColorField>
          <Swatch /><Hex>8E9556</Hex>
          <Opacity>100<Muted>%</Muted></Opacity>
        </ColorField>
        <Push>
          <svg width="19" height="13" {...ink}><path d="M.8 6.5Q4 .8 9.5 .8T18.2 6.5Q15 12.2 9.5 12.2T.8 6.5z" /><circle cx="9.5" cy="6.5" r="2" strokeWidth="1.6" /></svg>
        </Push>
      </Row>
    </Section>
    <Section $h={51}>
      <Row $h={50} $pl={20} $pr={17}>
        <SectionTitle>Local variables</SectionTitle>
        <Push>
          <svg width="16" height="18" fill="none" stroke="#7f7f7f" strokeWidth="1.2"><path d="M3.5 .5V9.3M3.5 14.7V17.5M12.5 0V3.3M12.5 8.7V17.5" /><circle cx="3.5" cy="12" r="2.7" /><circle cx="12.5" cy="6" r="2.7" /></svg>
        </Push>
      </Row>
    </Section>
    <Section $h={51}><Row $h={50} $pl={20} $pr={18}><SectionTitle>Local styles</SectionTitle><Push><Plus c="#7f7f7f" /></Push></Row></Section>
    <Section $h={51}><Row $h={50} $pl={20} $pr={18}><SectionTitle>Export</SectionTitle><Push><Plus c="#7f7f7f" /></Push></Row></Section>
    <Help>
      <svg width="14" height="20" fill="none" stroke="#fff" strokeWidth="1.5"><path d="M2 6Q2 1.5 6.8 1.5T11.6 5.8Q11.6 8.4 9 9.8Q6.8 11 6.8 14" /><circle cx="6.8" cy="17.6" r=".6" fill="#fff" /></svg>
    </Help>
  </Inspector>
);

const S = ({ children }: { children: React.ReactNode }) => <svg width="30" height="30" viewBox="0 0 30 30">{children}</svg>;

const Bottom = () => (
  <Taskbar>
    <svg width="0" height="0">
      <defs>
        <linearGradient id="win" x1="0" y1="0" x2="1" y2="1"><stop stopColor="#4cc9fb" /><stop offset="1" stopColor="#0a78d3" /></linearGradient>
        <linearGradient id="sun" x1="0" y1="0" x2="0" y2="1"><stop stopColor="#f8b02a" /><stop offset="1" stopColor="#f27d16" /></linearGradient>
        <linearGradient id="gold" x1="0" y1="0" x2="1" y2="1"><stop stopColor="#ffdc62" /><stop offset="1" stopColor="#fcb91c" /></linearGradient>
        <linearGradient id="cpA" x1="0" y1="0" x2="0" y2="1"><stop stopColor="#0f7ce0" /><stop offset=".5" stopColor="#25b1a6" /><stop offset="1" stopColor="#d8d42b" /></linearGradient>
        <linearGradient id="cpB" x1="1" y1="0" x2="0" y2="1"><stop stopColor="#a44ef0" /><stop offset=".55" stopColor="#f0528e" /><stop offset="1" stopColor="#fc9a4c" /></linearGradient>
        <linearGradient id="edA" x1="0" y1="0" x2="1" y2="0"><stop stopColor="#1f8fd8" /><stop offset=".5" stopColor="#36c3c8" /><stop offset="1" stopColor="#5fdc5c" /></linearGradient>
        <linearGradient id="hex" x1="0" y1="0" x2="1" y2="1"><stop stopColor="#4fa9ea" /><stop offset="1" stopColor="#6a35ea" /></linearGradient>
        <linearGradient id="store" x1="0" y1="0" x2="1" y2="1"><stop stopColor="#0f5fae" /><stop offset="1" stopColor="#273a64" /></linearGradient>
        <linearGradient id="wps" x1="0" y1="0" x2="0" y2="1"><stop stopColor="#fc1f1b" /><stop offset="1" stopColor="#fd5a0c" /></linearGradient>
        <linearGradient id="head" x1="0" y1="0" x2="1" y2="0"><stop stopColor="#5f7f78" /><stop offset=".5" stopColor="#d49b45" /><stop offset="1" stopColor="#e8c07a" /></linearGradient>
      </defs>
    </svg>
    <Weather>
      <svg width="36" height="44" viewBox="0 0 36 44">
        <path d="M1.500 24.500Q1.500 36 15.500 36Q29.500 34 29.500 19H17L15 24.500z" fill="url(#sun)" />
        <g stroke="#6d7072" strokeWidth="3" strokeLinecap="round"><path d="M8 14H10.500M8 19.200H28M3 24.300H16M22 24.300H25M3 29.400H25" /></g>
        <circle cx="25" cy="10.300" r="10" fill="#c42b1c" />
        <text x="25" y="15.300" textAnchor="middle" fontSize="13.500" fill="#fff" fontFamily="Open Sans">1</text>
      </svg>
      <WeatherText $w={60}><span>81°F</span><span>Haze</span></WeatherText>
    </Weather>
    <svg width="29" height="29" fill="url(#win)"><rect width="14" height="14" rx="1" /><rect x="15" width="14" height="14" rx="1" /><rect y="15" width="14" height="14" rx="1" /><rect x="15" y="15" width="14" height="14" rx="1" /></svg>
    <SearchBox>
      <Magnify s={19} w={2} />
      <SearchLabel>Search</SearchLabel>
      <Doodle>
        <svg width="24" height="24" viewBox="0 0 24 24" fill="none" stroke="#73777b" strokeWidth="1">
          <ellipse cx="12" cy="12" rx="11" ry="4.2" /><ellipse cx="12" cy="12" rx="11" ry="4.2" transform="rotate(60 12 12)" /><ellipse cx="12" cy="12" rx="11" ry="4.2" transform="rotate(120 12 12)" />
          <g fill="#5d6450" stroke="none"><circle cx="12" cy="12" r="1.8" /><circle cx="6" cy="2.6" r="1.7" /><circle cx="23" cy="11.5" r="1.5" /><circle cx="5.6" cy="18.4" r="1.8" /></g>
        </svg>
        <svg width="28" height="32" viewBox="0 0 28 32">
          <path d="M8 5Q12 .6 18 1.4Q26 3 26.5 11Q26.5 18 22.5 21L23.5 26L28 31H8L11 24Q5 24 5 20L2.5 18L5 10Q5.5 7 8 5z" fill="url(#head)" />
          <path d="M10 25L20 23L22 31H9z" fill="#5b431f" />
          <path d="M6 11H13M15.500 9L22 11" stroke="#c7d6da" strokeWidth="1.4" />
          <circle cx="16" cy="17" r="3.2" fill="#f2a01f" />
        </svg>
      </Doodle>
    </SearchBox>
    <Apps>
      <AppTile><S><rect y="9" width="23" height="20" rx="1" fill="#292a2a" /><rect x="7" y="1" width="23" height="20" rx="1" fill="#f8f9fa" /><rect x="7" y="9" width="16" height="12" fill="#b5b6b6" /></S></AppTile>
      <AppTile><ChromeLogo /></AppTile>
      <AppTile>
        <S>
          <path d="M9 1.5H18.500Q21 1.500 21.700 4L22.500 7H19Q16.500 7 15.800 9.500L13 19.500Q12 22.500 9 22.500H4.500Q0 22.500 .8 17.500L4 6Q5.300 1.500 9 1.500z" fill="url(#cpA)" />
          <path d="M21 28.500H12Q9.500 28.500 8.800 26L8 23H11Q13.500 23 14.200 20.500L17 10.500Q18 7.500 21 7.500H25.500Q30 7.500 29.200 12.500L26 24Q24.700 28.500 21 28.500z" fill="url(#cpB)" />
          <path d="M14 1.500H18.500Q21 1.500 21.700 4L22.500 7H19L17.500 7.400z" fill="#1d5fc9" />
        </S>
      </AppTile>
      <AppTile>
        <S>
          <circle cx="15.500" cy="6" r="4.500" fill="#7b83eb" /><circle cx="24.500" cy="7" r="3.200" fill="#5059c9" />
          <path d="M20 12H29V20Q28.500 25 24 25Q20 25 20 20z" fill="#5059c9" /><path d="M8 12H23V20Q22.500 28 15.500 28Q8.500 28 8 20z" fill="#7b83eb" />
          <rect y="7" width="15.500" height="15.500" rx="1.500" fill="#474fb3" />
          <text x="7.700" y="19" textAnchor="middle" fontFamily="Open Sans" fontWeight="700" fontSize="11.500" fill="#fff">T</text>
        </S>
      </AppTile>
      <AppTile>
        <S>
          <path d="M15 2.500A12.500 12.500 0 1 1 9 26" fill="none" stroke="#43b02a" strokeWidth="4.600" />
          <path d="M13 2.500A12.500 12.500 0 0 0 8 25" fill="none" stroke="#5db948" strokeWidth="4.200" strokeDasharray="2 1.400" />
        </S>
      </AppTile>
      <AppTile>
        <S>
          <path d="M0 3Q0 2 1 2H11L14 5H30V12H0z" fill="#dc9a0d" />
          <path d="M0 8H10L13 5.500H29Q30 5.500 30 6.500V27Q30 28 29 28H1Q0 28 0 27z" fill="url(#gold)" />
          <path d="M5 28V23Q5 21 7 21H23Q25 21 25 23V28z" fill="#1478cc" /><path d="M8.500 24.500H21.500" stroke="#0b4f8e" strokeWidth="1.200" />
        </S>
      </AppTile>
      <AppTile>
        <S>
          <path d="M8.500 7V3Q8.500 1.800 9.700 1.800H20.300Q21.500 1.800 21.500 3V7" fill="none" stroke="#2cb7f2" strokeWidth="1.700" />
          <path d="M.5 6H29.500V25Q29.500 29.500 25 29.500H5Q.5 29.500 .5 25z" fill="url(#store)" />
          <rect x="9.500" y="12" width="5.300" height="5.300" fill="#f25022" /><rect x="15.600" y="12" width="5.300" height="5.300" fill="#7fba00" /><rect x="9.500" y="18" width="5.300" height="5.300" fill="#00a4ef" /><rect x="15.600" y="18" width="5.300" height="5.300" fill="#ffb900" />
        </S>
      </AppTile>
      <AppTile>
        <S>
          <circle cx="15" cy="15" r="15" fill="#1b86d2" />
          <path d="M.5 12Q3 0 15.500 0Q30 1 30 13Q29 21 21 21Q17 20.500 18.500 17Q20 11 13 9Q5 8 .5 12z" fill="url(#edA)" />
          <path d="M12 11Q6 19 11 25Q17 31 28 23Q24 30 15.500 30Q4 28 5.500 18Q7 12 12 11z" fill="#0f4f9e" />
          <path d="M17.500 20.500Q15 18 12.500 18Q13 13 17.500 12.500Q19.500 14 18.500 16.500Q17.500 19 21 21Q26 22 29 19.500Q28.500 22 27.500 23.500Q22 25.500 17.500 20.500z" fill="#d5dde2" />
        </S>
      </AppTile>
      <AppTile>
        <S>
          <path d="M15 0L29 7.500V22.500L15 30L1 22.500V7.500z" fill="url(#hex)" />
          <path d="M4.500 20.500L10.500 9Q11.500 7.500 12.500 9L18.500 20.500M10 18L14 18M17 10.500Q18 8.800 19 10.500L25 20.500" fill="none" stroke="#fff" strokeWidth="2" strokeLinecap="round" strokeLinejoin="round" />
        </S>
      </AppTile>
      <AppTile>
        <S>
          <circle cx="15" cy="15" r="15" fill="url(#wps)" />
          <path d="M5.500 9.500H13L17.500 21L21.500 9.500H24.500L19.500 21H17M6.500 9.500L10.500 21H12.500L16.500 10" fill="none" stroke="#fff" strokeWidth="2" strokeLinejoin="round" />
        </S>
      </AppTile>
      <AppTile $active $mark="#0a78d4" $mw={20}><ChromeLogo /><AppBadge>D</AppBadge></AppTile>
      <AppTile $mark="#7c8082" $mw={8}>
        <S>
          <path d="M22 0L1 19Q0 20 1 21.200L2.800 22.800Q3.800 23.500 5 22.700L23 9z" fill="#1583ca" />
          <path d="M22 30L1 11Q0 10 1 8.800L2.800 7.200Q3.800 6.500 5 7.300L23 21z" fill="#1a74b8" />
          <path d="M22 0L30 3.500V26.500L22 30Q23 29 23 27V3Q23 1 22 0z" fill="#2aa8f4" />
        </S>
      </AppTile>
    </Apps>
    <Tray>
      <TrayItem $w={40}><svg width="14" height="9" fill="none" stroke="#1b1b1b" strokeWidth="1.500"><path d="M1.500 7.500L7 2L12.500 7.500" /></svg></TrayItem>
      <TrayItem $w={40}>
        <svg width="22" height="22" fill="none" stroke="#1b1b1b" strokeWidth="1.500">
          <path d="M3 8.500A8.500 8.500 0 0 1 18.500 7M18.800 2.500V7.500H13.800" /><path d="M11 19A8.500 8.500 0 0 1 3.500 14.500M3.200 19V14H8.200" />
          <circle cx="17" cy="16.500" r="4.800" fill="#f28c1c" stroke="none" />
        </svg>
      </TrayItem>
      <Stack $align="center" $w={56}><span>ENG</span><span>IN</span></Stack>
      <TrayItem $w={38}>
        <svg width="20" height="18" viewBox="0 0 20 18" fill="none" stroke="#1b1b1b" strokeWidth="1.500" strokeLinecap="round"><path d="M1.500 6.500Q10 -2 18.500 6.500M4.200 9.500Q10 3.700 15.800 9.500M6.900 12.500Q10 9.500 13.100 12.500" /><circle cx="10" cy="15.300" r="1.100" fill="#1b1b1b" stroke="none" /></svg>
      </TrayItem>
      <TrayItem $w={19}>
        <svg width="19" height="18" viewBox="0 0 19 18" fill="none" stroke="#1b1b1b" strokeWidth="1.300" strokeLinejoin="round"><path d="M1.500 6.500H4.500L9 2.500V15.500L4.500 11.500H1.500z" /><path d="M11.500 6.500Q13.300 9 11.500 11.500" /><path d="M13.700 4.300Q17 9 13.700 13.700M16 2.500Q20 9 16 15.500" stroke="#9a9fa2" /></svg>
      </TrayItem>
      <TrayItem $w={45}>
        <svg width="21" height="13" fill="none" stroke="#1b1b1b" strokeWidth="1.300"><rect x=".8" y=".8" width="16.400" height="11" rx="3" /><path d="M19.300 4.500V8" strokeLinecap="round" /><rect x="3" y="3" width="4.500" height="6.600" rx="1" fill="#1b1b1b" stroke="none" /></svg>
      </TrayItem>
      <Clock $align="flex-end" $w={85} $ls={-0.02}><span>18:11</span><span>02-01-2025</span></Clock>
      <TrayItem $w={38}>
        <svg width="16" height="19" viewBox="0 0 16 19" fill="#0f5fb4"><path d="M8 .8A5.700 5.700 0 0 0 2.300 6.500V10.500L.6 14H15.400L13.700 10.500V6.500A5.700 5.700 0 0 0 8 .8zM5.500 15.500H10.500Q10 18 8 18T5.500 15.500z" /></svg>
      </TrayItem>
    </Tray>
  </Taskbar>
);

export default function App() {
  return (
    <>
      <Global />
      <Screen>
        <Browser />
        <Workspace>
          <LeftPanel />
          <Canvas />
          <RightPanel />
        </Workspace>
        <Bottom />
      </Screen>
    </>
  );
}
